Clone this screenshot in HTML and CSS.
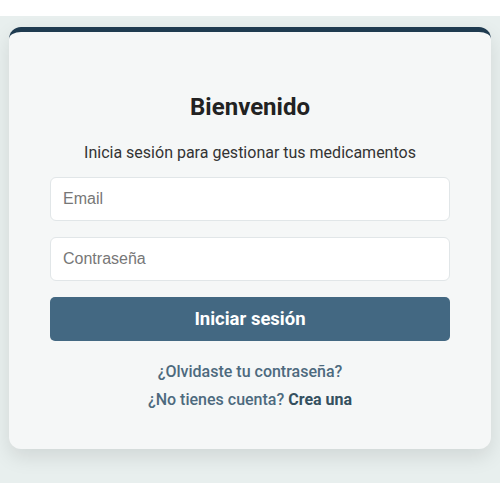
FILE: index.html
```html
<!DOCTYPE html>
<html lang="es">
<head>
<meta charset="utf-8">
<title>Login</title>
<link rel="stylesheet" href="styles.css">
</head>
<body>
<div class="page">
  <div class="card">
    <h1 class="title">Bienvenido</h1>
    <p class="subtitle">Inicia sesión para gestionar tus medicamentos</p>
    <form class="form">
      <input class="field" type="email" placeholder="Email">
      <input class="field" type="password" placeholder="Contraseña">
      <button class="btn" type="button">Iniciar sesión</button>
    </form>
    <div class="links">
      <a class="link" href="#">¿Olvidaste tu contraseña?</a>
      <p class="link-line">¿No tienes cuenta? <a class="link strong" href="#">Crea una</a></p>
    </div>
  </div>
</div>
</body>
</html>
```
FILE: styles.css
```css
* { box-sizing: border-box; }
html, body { margin: 0; padding: 0; background: #ffffff; }
body { font-family: Roboto, "Liberation Sans", sans-serif; }
.page {
  margin-top: 16px;
  height: 467px;
  background: #e8efee;
  padding: 11px 9px 34px;
}
.card {
  height: 422px;
  background: #f5f7f7;
  border-top: 5px solid #1f3b50;
  border-radius: 12px;
  box-shadow: 0 8px 20px rgba(0, 0, 0, 0.10);
  padding: 61px 41px 39px;
  display: flex;
  flex-direction: column;
  align-items: stretch;
  text-align: center;
}
.title {
  margin: 0;
  font-size: 24px;
  line-height: 28px;
  font-weight: 700;
  color: #222;
}
.subtitle {
  margin: 22px 0 15px;
  font-size: 16px;
  line-height: 19px;
  color: #333;
}
.form {
  display: flex;
  flex-direction: column;
  gap: 16px;
}
.field {
  height: 44px;
  width: 100%;
  border: 1px solid #e1e6e8;
  border-radius: 6px;
  background: #fff;
  padding: 0 12px;
  font-family: "Liberation Sans", Arial, sans-serif;
  font-size: 16px;
  color: #333;
}
.field::placeholder { color: #777; }
.btn {
  height: 44px;
  width: 100%;
  border: none;
  border-radius: 5px;
  background: #436882;
  color: #fff;
  font-family: Roboto, "Liberation Sans", sans-serif;
  font-size: 18.5px;
  font-weight: 700;
}
.links {
  margin-top: 21px;
  display: flex;
  flex-direction: column;
  align-items: center;
  gap: 8px;
}
.link {
  font-size: 16px;
  line-height: 20px;
  font-weight: 500;
  color: #4d6a7e;
  text-decoration: none;
}
.link-line {
  margin: 0;
  font-size: 16px;
  line-height: 20px;
  font-weight: 500;
  color: #4d6a7e;
}
.link.strong {
  font-weight: 700;
  color: #34505f;
}
```
